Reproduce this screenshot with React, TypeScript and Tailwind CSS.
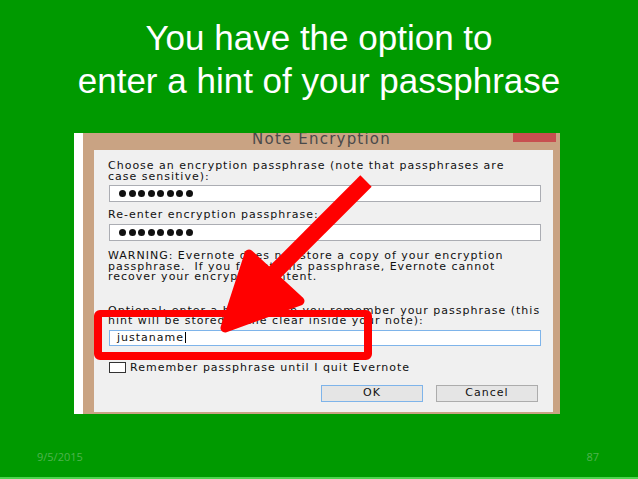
const dlgFont = { fontFamily: '"DejaVu Sans", Verdana, sans-serif' };

function Dots() {
  return (
    <div className="flex items-center gap-[2.5px] pl-[9px]">
      {Array.from({ length: 8 }).map((_, i) => (
        <span key={i} className="h-[7px] w-[7px] rounded-full bg-[#111]" />
      ))}
    </div>
  );
}

function Field({ children, focused = false }: { children?: React.ReactNode; focused?: boolean }) {
  return (
    <div
      className={
        focused
          ? "ml-[15px] flex h-[16px] w-[432px] items-center border border-[#7eb4ea] bg-white"
          : "ml-[15px] flex h-[17px] w-[432px] items-center border border-[#abadb3] bg-white"
      }
    >
      {children}
    </div>
  );
}

function Arrow() {
  return (
    <svg
      className="pointer-events-none absolute left-0 top-0"
      width="638"
      height="479"
      viewBox="0 0 638 479"
      aria-hidden
    >
      <line x1="366" y1="181" x2="262" y2="285" stroke="#ff0000" strokeWidth="16" strokeLinecap="butt" />
      <polygon
        points="225,328 249,254 300,301"
        fill="#ff0000"
        stroke="#ff0000"
        strokeWidth="9"
        strokeLinejoin="round"
      />
    </svg>
  );
}

export default function App() {
  return (
    <div className="relative flex h-[479px] w-[638px] flex-col overflow-hidden bg-[#009a00]">
      <h1
        className="pt-[16px] text-center text-[35px] font-normal leading-[43px] text-white"
        style={{ fontFamily: '"Liberation Sans", Arial, sans-serif' }}
      >
        You have the option to
        <br />
        enter a hint of your passphrase
      </h1>

      {/* screenshot of the dialog */}
      <div className="ml-[74px] mt-[31px] flex h-[281px] w-[486px]" style={dlgFont}>
        <div className="w-[9px] bg-white" />
        <div className="flex flex-1 flex-col bg-[#c9a383]">
          <div className="flex h-[17px] overflow-hidden pl-[47px]">
            <div className="-mt-[2px] flex-1 text-center text-[15px] leading-[16px] tracking-[1.2px] text-[#4a4a4a]">
              Note Encryption
            </div>
            <div className="mr-[4px] h-[9px] w-[43px] bg-[#c75050]" />
          </div>
          <div className="ml-[11px] mr-[7px] flex flex-1 flex-col bg-[#f0f0f0] pb-[10px] text-[11px] leading-[10.5px] tracking-[1px] text-[#111]">
            <p className="ml-[14px] mt-[11px]">
              Choose an encryption passphrase (note that passphrases are
              <br />
              case sensitive):
            </p>
            <div className="mt-[3px]">
              <Field>
                <Dots />
              </Field>
            </div>
            <p className="ml-[14px] mt-[8px]">Re-enter encryption passphrase:</p>
            <div className="mt-[3.5px]">
              <Field>
                <Dots />
              </Field>
            </div>
            <p className="ml-[14px] mt-[10px]">
              WARNING: Evernote does not store a copy of your encryption
              <br />
              passphrase.&nbsp; If you forget this passphrase, Evernote cannot
              <br />
              recover your encrypted content.
            </p>
            <p className="ml-[14px] mt-[23px] whitespace-nowrap">
              Optional: enter a hint to help you remember your passphrase (this
              <br />
              hint will be stored in the clear inside your note):
            </p>
            <div className="mt-[3px]">
              <Field focused>
                <span className="pl-[7px] text-[11px] leading-[12px] text-[#111]">justaname</span>
                <span className="ml-[1px] h-[11px] w-[1px] bg-black" />
              </Field>
            </div>
            <div className="ml-[15px] mt-[16px] flex items-center gap-[4px]">
              <span className="h-[11px] w-[17px] border border-[#333] bg-white" />
              <span className="text-[11px] leading-[12px]">Remember passphrase until I quit Evernote</span>
            </div>
            <div className="mt-[11px] flex justify-end gap-[13px] pr-[15px]">
              <div className="flex h-[17px] w-[102px] items-center justify-center border border-[#7eb4ea] bg-[#e5e5e5] text-[11px]">
                OK
              </div>
              <div className="flex h-[17px] w-[102px] items-center justify-center border border-[#acacac] bg-[#e5e5e5] text-[11px]">
                Cancel
              </div>
            </div>
          </div>
          <div className="h-[2px]" />
        </div>
      </div>

      <div
        className="mt-auto flex justify-between pb-[14px] pl-[37px] pr-[39px] text-[11px] leading-[12px] text-[#4fb44f]"
        style={{ fontFamily: '"Open Sans", "Liberation Sans", sans-serif' }}
      >
        <span>9/5/2015</span>
        <span>87</span>
      </div>
      <div className="h-[2px] bg-[#4fd44f]" />

      {/* callout overlays */}
      <div className="pointer-events-none absolute left-[94px] top-[310px] h-[50px] w-[278px] rounded-[6px] border-[8px] border-t-[7px] border-[#ff0000]" />
      <Arrow />
    </div>
  );
}
